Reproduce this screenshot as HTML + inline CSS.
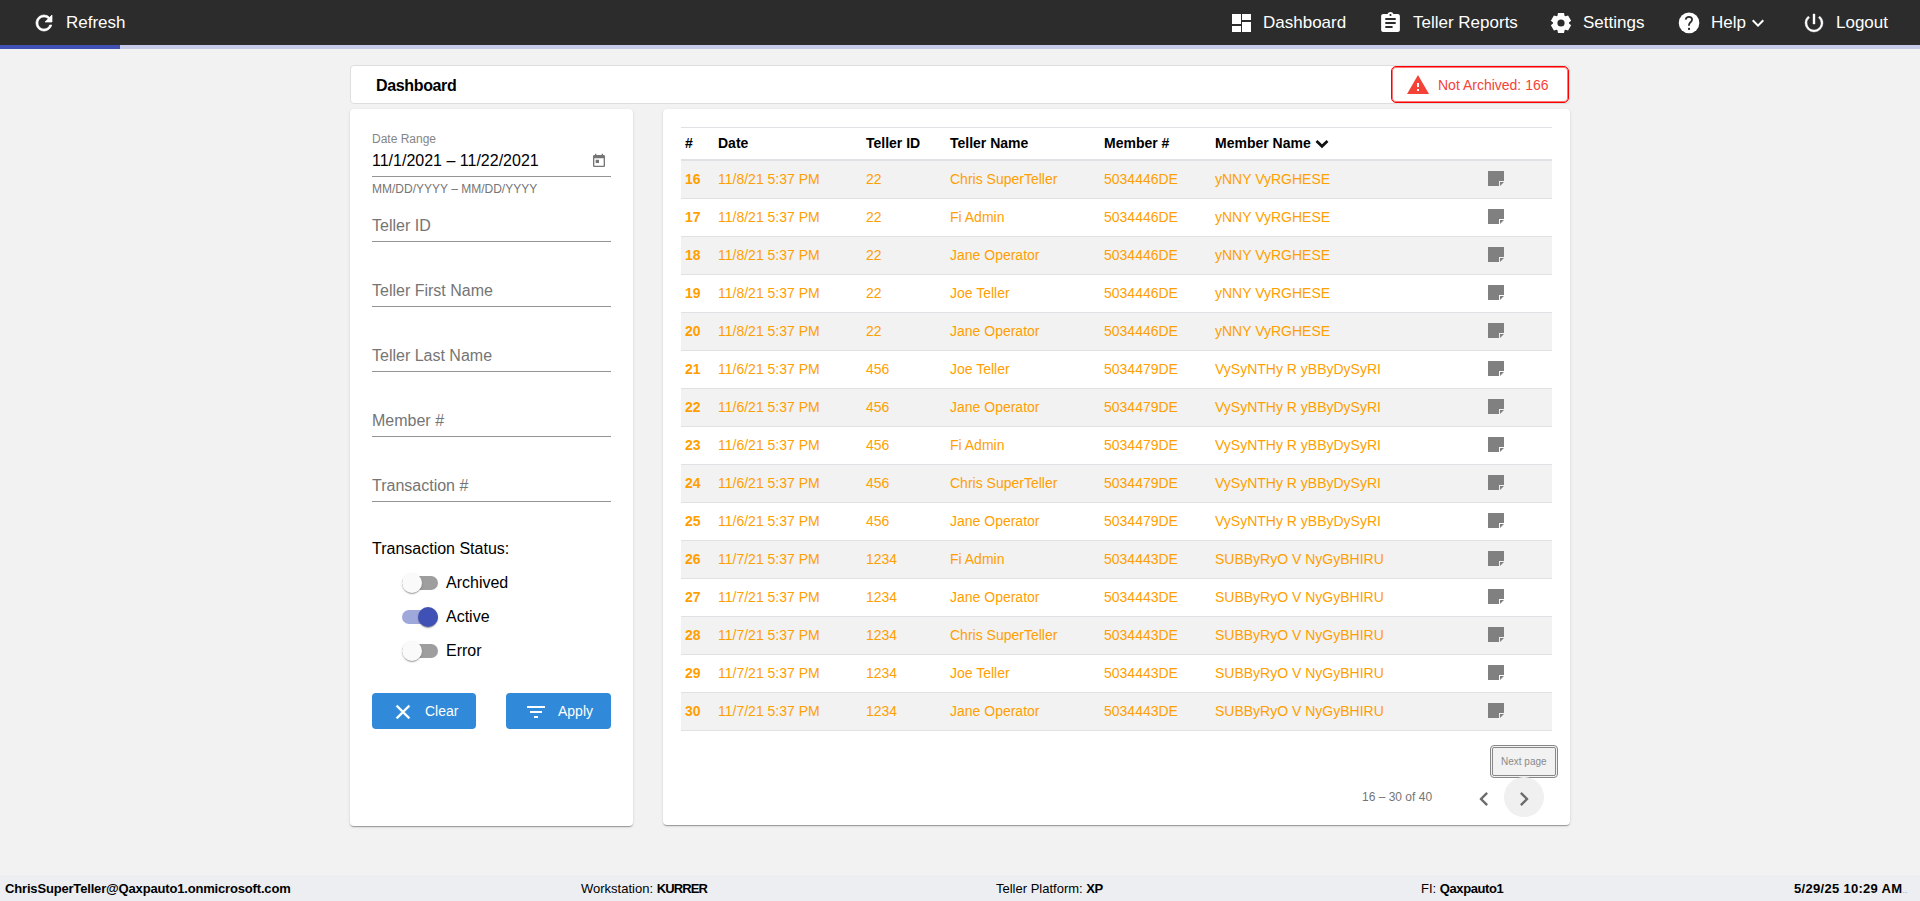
<!DOCTYPE html>
<html><head><meta charset="utf-8">
<style>
*{box-sizing:border-box;margin:0;padding:0}
html,body{width:1920px;height:901px;overflow:hidden}
body{background:#f2f2f2;font-family:"Liberation Sans",sans-serif;position:relative;color:#000}
.abs{position:absolute;white-space:nowrap}
#nav{position:absolute;left:0;top:0;width:1920px;height:45px;background:#2c2c2c}
#prog{position:absolute;left:0;top:45px;width:1920px;height:4px;background:#c5cae9}
#prog div{position:absolute;left:0;top:0;width:120px;height:4px;background:#3f51b5}
.nt{color:#fff;font-size:17px;line-height:20px;top:13px}
.ni{position:absolute;fill:#fff}
.card{position:absolute;background:#fff;border-radius:4px;box-shadow:0 2px 1px -1px rgba(0,0,0,.2),0 1px 1px 0 rgba(0,0,0,.14),0 1px 3px 0 rgba(0,0,0,.12)}
.lbl{font-size:12px;color:#757575}
.ph{font-size:16px;color:#757575}
.ul{position:absolute;left:372px;width:239px;height:1px;background:#949494}
.sw-track{position:absolute;left:402px;width:36px;height:14px;border-radius:7px;background:#9e9e9e}
.sw-thumb{position:absolute;width:20px;height:20px;border-radius:50%;background:#fafafa;box-shadow:0 2px 1px -1px rgba(0,0,0,.2),0 1px 1px 0 rgba(0,0,0,.14),0 1px 3px 0 rgba(0,0,0,.12)}
.btn{position:absolute;top:693px;height:36px;background:#308ad9;border-radius:4px;color:#fff;font-size:14px}
.th{font-size:14px;font-weight:bold;color:#000;top:135px;line-height:16px}
.row{position:absolute;left:681px;width:871px;height:38px;border-bottom:1px solid #dfe1e5}
.row.odd{background:#f2f2f2}
.row span{position:absolute;top:10px;line-height:16px;font-size:14px;color:#ff9f00;white-space:nowrap}
.row span.n{font-weight:bold}
.note{position:absolute;top:10px;width:16px;height:15px}
#footer{position:absolute;left:0;top:875px;width:1920px;height:26px;background:#eceef1}
.ft{font-size:13px;top:881px;line-height:15px}
</style></head><body>
<div id="nav"></div>
<div id="prog"><div></div></div>
<!-- nav content -->
<svg class="ni" style="left:32px;top:11px" width="24" height="24" viewBox="0 0 24 24"><path stroke="#fff" stroke-width="0.7" d="M17.65 6.35A7.958 7.958 0 0 0 12 4c-4.42 0-7.99 3.58-7.99 8s3.57 8 7.99 8c3.73 0 6.84-2.55 7.73-6h-2.08A5.99 5.99 0 0 1 12 18c-3.31 0-6-2.69-6-6s2.69-6 6-6c1.66 0 3.14.69 4.22 1.78L13 11h7V4l-2.35 2.35z"/></svg>
<div class="abs nt" style="left:66px">Refresh</div>

<svg class="ni" style="left:1232px;top:14px" width="19" height="18" viewBox="0 0 19 18"><path d="M0 0h9v10H0zM0 12h9v6H0zM10 0h9v6h-9zM10 8h9v10h-9z"/></svg>
<div class="abs nt" style="left:1263px">Dashboard</div>
<svg class="ni" style="left:1378px;top:11px" width="25" height="24" viewBox="0 0 24 24" preserveAspectRatio="none"><path d="M19 3h-4.18C14.4 1.84 13.3 1 12 1c-1.3 0-2.4.84-2.82 2H5c-1.1 0-2 .9-2 2v14c0 1.1.9 2 2 2h14c1.1 0 2-.9 2-2V5c0-1.1-.9-2-2-2zm-7 0c.55 0 1 .45 1 1s-.45 1-1 1-1-.45-1-1 .45-1 1-1zm2 14H7v-2h7v2zm3-4H7v-2h10v2zm0-4H7V7h10v2z"/></svg>
<div class="abs nt" style="left:1413px">Teller Reports</div>
<svg class="ni" style="left:1549px;top:11px" width="24" height="24" viewBox="0 0 24 24"><path fill-rule="evenodd" d="M8.49 4.81 L8.96 2.05 L15.04 2.05 L15.51 4.81 L16.00 5.07 L16.47 5.37 L19.09 4.39 L22.13 9.66 L19.98 11.44 L20.00 12.00 L19.98 12.56 L22.13 14.34 L19.09 19.61 L16.47 18.63 L16.00 18.93 L15.51 19.19 L15.04 21.95 L8.96 21.95 L8.49 19.19 L8.00 18.93 L7.53 18.63 L4.91 19.61 L1.87 14.34 L4.02 12.56 L4.00 12.00 L4.02 11.44 L1.87 9.66 L4.91 4.39 L7.53 5.37 L8.00 5.07Z M15.6 12 A3.6 3.6 0 1 0 8.4 12 A3.6 3.6 0 1 0 15.6 12Z"/></svg>
<div class="abs nt" style="left:1583px">Settings</div>
<svg class="ni" style="left:1677px;top:11px" width="24" height="24" viewBox="0 0 24 24"><circle cx="12.05" cy="11.9" r="10.3" fill="#fff"/><path fill="none" stroke="#2c2c2c" stroke-width="1.75" d="M8.7 8.7C8.9 6.8 10.2 5.9 12 5.9C13.9 5.9 15.1 7.1 15.1 8.6C15.1 10.2 13.8 10.9 12.9 11.8C12.2 12.5 11.9 13.3 11.9 14.8"/><rect x="11" y="16.9" width="2" height="2" fill="#2c2c2c"/></svg>
<div class="abs nt" style="left:1711px">Help</div>
<svg class="ni" style="left:1746px;top:11px" width="24" height="24" viewBox="0 0 24 24"><path d="M7.41 8.59L12 13.17l4.59-4.58L18 10l-6 6-6-6 1.41-1.41z"/></svg>
<svg class="ni" style="left:1802px;top:11px" width="24" height="24" viewBox="0 0 24 24"><path stroke="#fff" stroke-width="0.4" d="M13 3h-2v10h2V3zm4.83 2.17l-1.42 1.42A6.92 6.92 0 0 1 19 12c0 3.87-3.13 7-7 7A6.995 6.995 0 0 1 7.58 6.58L6.17 5.17A8.932 8.932 0 0 0 3 12a9 9 0 0 0 18 0c0-2.74-1.23-5.18-3.17-6.83z"/></svg>
<div class="abs nt" style="left:1836px">Logout</div>

<!-- header card -->
<div class="abs" style="left:350px;top:65px;width:1220px;height:39px;background:#fff;border:1px solid #dedede;border-radius:4px"></div>
<div class="abs" style="left:376px;top:77px;font-size:16px;font-weight:bold;line-height:18px;letter-spacing:-0.35px">Dashboard</div>
<div class="abs" style="left:1391px;top:66px;width:178px;height:37px;background:#fff;border:1px solid #ff0000;box-shadow:inset 0 0 0 1px rgba(255,0,0,.55);border-radius:5px"></div>
<svg class="abs" style="left:1406px;top:73px" width="24" height="24" viewBox="0 0 24 24"><path fill="#f44336" d="M1 21h22L12 2 1 21zm12-3h-2v-2h2v2zm0-4h-2v-4h2v4z"/></svg>
<div class="abs" style="left:1438px;top:77px;font-size:14px;line-height:16px;color:#f44336">Not Archived: 166</div>

<!-- left card -->
<div class="card" style="left:350px;top:109px;width:283px;height:717px"></div>
<div class="abs lbl" style="left:372px;top:131px;line-height:14px;color:#858585;transform:translateY(0.5px)">Date Range</div>
<div class="abs" style="left:372px;top:152px;font-size:16px;line-height:18px">11/1/2021 – 11/22/2021</div>
<svg class="abs" style="left:591px;top:153px" width="16" height="16" viewBox="0 0 24 24"><path fill="#757575" d="M19 3h-1V1h-2v2H8V1H6v2H5c-1.11 0-1.99.9-1.99 2L3 19a2 2 0 0 0 2 2h14c1.1 0 2-.9 2-2V5c0-1.1-.9-2-2-2zm0 16H5V8h14v11zM7 10h5v5H7z"/></svg>
<div class="ul" style="top:176px"></div>
<div class="abs lbl" style="left:372px;top:182px;line-height:14px">MM/DD/YYYY – MM/DD/YYYY</div>
<div class="abs ph" style="left:372px;top:217px;line-height:18px">Teller ID</div>
<div class="ul" style="top:241px"></div>
<div class="abs ph" style="left:372px;top:282px;line-height:18px">Teller First Name</div>
<div class="ul" style="top:306px"></div>
<div class="abs ph" style="left:372px;top:347px;line-height:18px">Teller Last Name</div>
<div class="ul" style="top:371px"></div>
<div class="abs ph" style="left:372px;top:412px;line-height:18px">Member #</div>
<div class="ul" style="top:436px"></div>
<div class="abs ph" style="left:372px;top:477px;line-height:18px">Transaction #</div>
<div class="ul" style="top:501px"></div>

<div class="abs" style="left:372px;top:540px;font-size:16px;line-height:18px">Transaction Status:</div>
<div class="sw-track" style="top:576px"></div><div class="sw-thumb" style="left:402px;top:573px"></div>
<div class="abs" style="left:446px;top:574px;font-size:16px;line-height:18px">Archived</div>
<div class="sw-track" style="top:610px;background:#9fa8da"></div><div class="sw-thumb" style="left:418px;top:607px;background:#3f51b5"></div>
<div class="abs" style="left:446px;top:608px;font-size:16px;line-height:18px">Active</div>
<div class="sw-track" style="top:644px"></div><div class="sw-thumb" style="left:402px;top:641px"></div>
<div class="abs" style="left:446px;top:642px;font-size:16px;line-height:18px">Error</div>

<div class="btn" style="left:372px;width:104px"></div>
<svg class="abs" style="left:391px;top:700px" width="24" height="24" viewBox="0 0 24 24"><path fill="#fff" stroke="#fff" stroke-width="0.35" d="M19 6.41L17.59 5 12 10.59 6.41 5 5 6.41 10.59 12 5 17.59 6.41 19 12 13.41 17.59 19 19 17.59 13.41 12z"/></svg>
<div class="abs" style="left:425px;top:703px;font-size:14px;line-height:16px;color:#fff">Clear</div>
<div class="btn" style="left:506px;width:105px"></div>
<svg class="abs" style="left:524px;top:700px" width="24" height="24" viewBox="0 0 24 24"><path fill="#fff" d="M10 18h4v-2h-4v2zM3 6v2h18V6H3zm3 7h12v-2H6v2z"/></svg>
<div class="abs" style="left:558px;top:703px;font-size:14px;line-height:16px;color:#fff">Apply</div>

<!-- right card -->
<div class="card" style="left:663px;top:109px;width:907px;height:716px"></div>
<div class="abs" style="left:681px;top:127px;width:871px;height:1px;background:#dfe1e5"></div>
<div class="abs th" style="left:685px">#</div>
<div class="abs th" style="left:718px">Date</div>
<div class="abs th" style="left:866px">Teller ID</div>
<div class="abs th" style="left:950px">Teller Name</div>
<div class="abs th" style="left:1104px">Member #</div>
<div class="abs th" style="left:1215px">Member Name</div>
<svg class="abs" style="left:1314px;top:138px" width="16" height="12" viewBox="0 0 16 12"><path fill="none" stroke="#111" stroke-width="2.8" d="M2.5 3L8 8.3 13.5 3"/></svg>
<div class="abs" style="left:681px;top:159px;width:871px;height:2px;background:#dfe1e5"></div>
<!--ROWS--><div class="row odd" style="top:161px"><span class="n" style="left:4px">16</span><span style="left:37px">11/8/21 5:37 PM</span><span style="left:185px">22</span><span style="left:269px">Chris SuperTeller</span><span style="left:423px">5034446DE</span><span style="left:534px">yNNY VyRGHESE</span><svg class="note" style="left:807px" width="16" height="15" viewBox="0 0 16 15"><path fill="#808080" d="M0 0H16V10H11V15H0Z M12 11H16L12 15Z"/></svg></div>
<div class="row" style="top:199px"><span class="n" style="left:4px">17</span><span style="left:37px">11/8/21 5:37 PM</span><span style="left:185px">22</span><span style="left:269px">Fi Admin</span><span style="left:423px">5034446DE</span><span style="left:534px">yNNY VyRGHESE</span><svg class="note" style="left:807px" width="16" height="15" viewBox="0 0 16 15"><path fill="#808080" d="M0 0H16V10H11V15H0Z M12 11H16L12 15Z"/></svg></div>
<div class="row odd" style="top:237px"><span class="n" style="left:4px">18</span><span style="left:37px">11/8/21 5:37 PM</span><span style="left:185px">22</span><span style="left:269px">Jane Operator</span><span style="left:423px">5034446DE</span><span style="left:534px">yNNY VyRGHESE</span><svg class="note" style="left:807px" width="16" height="15" viewBox="0 0 16 15"><path fill="#808080" d="M0 0H16V10H11V15H0Z M12 11H16L12 15Z"/></svg></div>
<div class="row" style="top:275px"><span class="n" style="left:4px">19</span><span style="left:37px">11/8/21 5:37 PM</span><span style="left:185px">22</span><span style="left:269px">Joe Teller</span><span style="left:423px">5034446DE</span><span style="left:534px">yNNY VyRGHESE</span><svg class="note" style="left:807px" width="16" height="15" viewBox="0 0 16 15"><path fill="#808080" d="M0 0H16V10H11V15H0Z M12 11H16L12 15Z"/></svg></div>
<div class="row odd" style="top:313px"><span class="n" style="left:4px">20</span><span style="left:37px">11/8/21 5:37 PM</span><span style="left:185px">22</span><span style="left:269px">Jane Operator</span><span style="left:423px">5034446DE</span><span style="left:534px">yNNY VyRGHESE</span><svg class="note" style="left:807px" width="16" height="15" viewBox="0 0 16 15"><path fill="#808080" d="M0 0H16V10H11V15H0Z M12 11H16L12 15Z"/></svg></div>
<div class="row" style="top:351px"><span class="n" style="left:4px">21</span><span style="left:37px">11/6/21 5:37 PM</span><span style="left:185px">456</span><span style="left:269px">Joe Teller</span><span style="left:423px">5034479DE</span><span style="left:534px">VySyNTHy R yBByDySyRI</span><svg class="note" style="left:807px" width="16" height="15" viewBox="0 0 16 15"><path fill="#808080" d="M0 0H16V10H11V15H0Z M12 11H16L12 15Z"/></svg></div>
<div class="row odd" style="top:389px"><span class="n" style="left:4px">22</span><span style="left:37px">11/6/21 5:37 PM</span><span style="left:185px">456</span><span style="left:269px">Jane Operator</span><span style="left:423px">5034479DE</span><span style="left:534px">VySyNTHy R yBByDySyRI</span><svg class="note" style="left:807px" width="16" height="15" viewBox="0 0 16 15"><path fill="#808080" d="M0 0H16V10H11V15H0Z M12 11H16L12 15Z"/></svg></div>
<div class="row" style="top:427px"><span class="n" style="left:4px">23</span><span style="left:37px">11/6/21 5:37 PM</span><span style="left:185px">456</span><span style="left:269px">Fi Admin</span><span style="left:423px">5034479DE</span><span style="left:534px">VySyNTHy R yBByDySyRI</span><svg class="note" style="left:807px" width="16" height="15" viewBox="0 0 16 15"><path fill="#808080" d="M0 0H16V10H11V15H0Z M12 11H16L12 15Z"/></svg></div>
<div class="row odd" style="top:465px"><span class="n" style="left:4px">24</span><span style="left:37px">11/6/21 5:37 PM</span><span style="left:185px">456</span><span style="left:269px">Chris SuperTeller</span><span style="left:423px">5034479DE</span><span style="left:534px">VySyNTHy R yBByDySyRI</span><svg class="note" style="left:807px" width="16" height="15" viewBox="0 0 16 15"><path fill="#808080" d="M0 0H16V10H11V15H0Z M12 11H16L12 15Z"/></svg></div>
<div class="row" style="top:503px"><span class="n" style="left:4px">25</span><span style="left:37px">11/6/21 5:37 PM</span><span style="left:185px">456</span><span style="left:269px">Jane Operator</span><span style="left:423px">5034479DE</span><span style="left:534px">VySyNTHy R yBByDySyRI</span><svg class="note" style="left:807px" width="16" height="15" viewBox="0 0 16 15"><path fill="#808080" d="M0 0H16V10H11V15H0Z M12 11H16L12 15Z"/></svg></div>
<div class="row odd" style="top:541px"><span class="n" style="left:4px">26</span><span style="left:37px">11/7/21 5:37 PM</span><span style="left:185px">1234</span><span style="left:269px">Fi Admin</span><span style="left:423px">5034443DE</span><span style="left:534px">SUBByRyO V NyGyBHIRU</span><svg class="note" style="left:807px" width="16" height="15" viewBox="0 0 16 15"><path fill="#808080" d="M0 0H16V10H11V15H0Z M12 11H16L12 15Z"/></svg></div>
<div class="row" style="top:579px"><span class="n" style="left:4px">27</span><span style="left:37px">11/7/21 5:37 PM</span><span style="left:185px">1234</span><span style="left:269px">Jane Operator</span><span style="left:423px">5034443DE</span><span style="left:534px">SUBByRyO V NyGyBHIRU</span><svg class="note" style="left:807px" width="16" height="15" viewBox="0 0 16 15"><path fill="#808080" d="M0 0H16V10H11V15H0Z M12 11H16L12 15Z"/></svg></div>
<div class="row odd" style="top:617px"><span class="n" style="left:4px">28</span><span style="left:37px">11/7/21 5:37 PM</span><span style="left:185px">1234</span><span style="left:269px">Chris SuperTeller</span><span style="left:423px">5034443DE</span><span style="left:534px">SUBByRyO V NyGyBHIRU</span><svg class="note" style="left:807px" width="16" height="15" viewBox="0 0 16 15"><path fill="#808080" d="M0 0H16V10H11V15H0Z M12 11H16L12 15Z"/></svg></div>
<div class="row" style="top:655px"><span class="n" style="left:4px">29</span><span style="left:37px">11/7/21 5:37 PM</span><span style="left:185px">1234</span><span style="left:269px">Joe Teller</span><span style="left:423px">5034443DE</span><span style="left:534px">SUBByRyO V NyGyBHIRU</span><svg class="note" style="left:807px" width="16" height="15" viewBox="0 0 16 15"><path fill="#808080" d="M0 0H16V10H11V15H0Z M12 11H16L12 15Z"/></svg></div>
<div class="row odd" style="top:693px"><span class="n" style="left:4px">30</span><span style="left:37px">11/7/21 5:37 PM</span><span style="left:185px">1234</span><span style="left:269px">Jane Operator</span><span style="left:423px">5034443DE</span><span style="left:534px">SUBByRyO V NyGyBHIRU</span><svg class="note" style="left:807px" width="16" height="15" viewBox="0 0 16 15"><path fill="#808080" d="M0 0H16V10H11V15H0Z M12 11H16L12 15Z"/></svg></div><!--/ROWS-->
<!-- pagination -->
<div class="abs" style="left:1490px;top:745px;width:68px;height:33px;border:3px double #888;border-radius:4px;background:#f2f2f2"></div>
<div class="abs" style="left:1501px;top:756px;font-size:10px;line-height:12px;color:#8a8a8a">Next page</div>
<div class="abs" style="left:1362px;top:790px;font-size:12px;line-height:14px;color:#757575">16 – 30 of 40</div>
<svg class="abs" style="left:1470px;top:785px" width="28" height="28" viewBox="0 0 24 24"><path fill="#6b6b6b" d="M15.41 7.41L14 6l-6 6 6 6 1.41-1.41L10.83 12z"/></svg>
<div class="abs" style="left:1504px;top:777px;width:40px;height:40px;border-radius:50%;background:#f0f0f0"></div>
<svg class="abs" style="left:1510px;top:785px" width="28" height="28" viewBox="0 0 24 24"><path fill="#6b6b6b" d="M10 6L8.59 7.41 13.17 12l-4.58 4.59L10 18l6-6z"/></svg>

<!-- footer -->
<div id="footer"></div>
<div class="abs ft" style="left:5px;font-weight:bold;letter-spacing:-0.17px">ChrisSuperTeller@Qaxpauto1.onmicrosoft.com</div>
<div class="abs ft" style="left:581px">Workstation: <b style="letter-spacing:-0.85px">KURRER</b></div>
<div class="abs ft" style="left:996px">Teller Platform: <b style="letter-spacing:-0.5px">XP</b></div>
<div class="abs ft" style="left:1421px">FI: <b style="letter-spacing:-0.4px">Qaxpauto1</b></div>
<div class="abs ft" style="left:1794px;font-weight:bold;letter-spacing:0.3px">5/29/25 10:29 AM<span style="color:#9aa;font-weight:normal;font-size:9px;letter-spacing:0">..</span></div>
</body></html>
